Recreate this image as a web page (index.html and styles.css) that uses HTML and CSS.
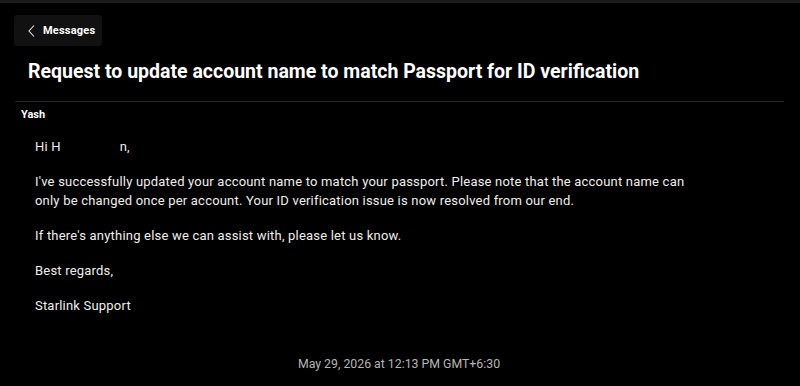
FILE: index.html
```html
<!DOCTYPE html>
<html>
<head>
<meta charset="utf-8">
<link rel="stylesheet" href="styles.css">
</head>
<body>
<div class="topbar"></div>
<main class="page">
  <div class="back-wrap">
    <button class="back">
      <svg class="chev" width="7" height="12" viewBox="0 0 7 12"><path d="M6 0.5 L1 6 L6 11.5" fill="none" stroke="#e6e6e6" stroke-width="1.1"/></svg>
      <span>Messages</span>
    </button>
  </div>
  <h1 class="title">Request to update account name to match Passport for ID verification</h1>
  <div class="divider"></div>
  <div class="sender">Yash</div>
  <div class="body">
    <p>Hi H<span class="redact"></span>n,</p>
    <p>I've successfully updated your account name to match your passport. Please note that the account name can<br>only be changed once per account. Your ID verification issue is now resolved from our end.</p>
    <p>If there's anything else we can assist with, please let us know.</p>
    <p>Best regards,</p>
    <p>Starlink Support</p>
  </div>
  <div class="stamp">May 29, 2026 at 12:13 PM GMT+6:30</div>
</main>
</body>
</html>
```
FILE: styles.css
```css
html, body {
  margin: 0;
  padding: 0;
  background: #000;
  color: #fff;
  font-family: Roboto, "Liberation Sans", sans-serif;
}
.topbar {
  height: 3px;
  background: #1c1c1c;
}
.page {
  padding: 12px 16px 0 14px;
}
.back-wrap {
  display: flex;
}
.back {
  display: flex;
  align-items: center;
  gap: 8px;
  height: 31px;
  width: 88px;
  padding: 0 0 0 14px;
  background: #111;
  border: none;
  border-radius: 3px;
  color: #fff;
  font-family: inherit;
  font-size: 11px;
  font-weight: 700;
  letter-spacing: 0.2px;
}
.title {
  margin: 12px 0 0 14px;
  font-size: 19.5px;
  font-weight: 700;
  line-height: 28px;
  color: #fff;
}
.divider {
  height: 1px;
  background: #262626;
  margin-top: 15px;
  margin-left: 1px;
}
.sender {
  margin: 6px 0 0 7px;
  font-size: 11px;
  font-weight: 700;
  line-height: 14px;
}
.body {
  margin: 15px 0 0 21px;
  font-size: 13px;
  letter-spacing: 0.2px;
  line-height: 19px;
  color: #eee;
}
.body p {
  margin: 0 0 16px;
}
.redact {
  display: inline-block;
  width: 59px;
}
.stamp {
  margin-top: 42px;
  text-align: center;
  font-size: 12.3px;
  color: #b5b5b5;
}
```
